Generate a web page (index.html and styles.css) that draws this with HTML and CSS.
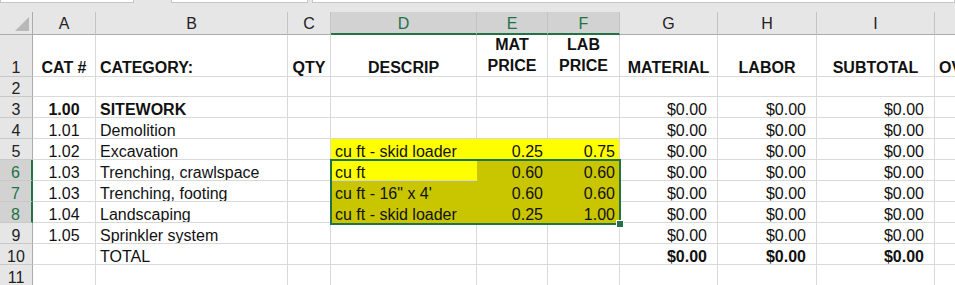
FILE: index.html
```html
<!DOCTYPE html>
<html>
<head>
    <meta charset="UTF-8">
    <title>Estimate</title>
    <link rel="stylesheet" href="styles.css">
</head>
<body>
    <div class="topbar">
        <div class="box name-box"></div>
        <div class="box fx-box"></div>
        <div class="box formula-box"></div>
    </div>

    <div class="sheet">
        <!-- column headers -->
        <div class="hd corner">
            <svg width="14" height="14" viewBox="0 0 14 14"><polygon points="14,0 14,14 0,14" fill="#b8b8b8"/></svg>
        </div>
        <div class="hd">A</div>
        <div class="hd">B</div>
        <div class="hd">C</div>
        <div class="hd sel-col">D</div>
        <div class="hd sel-col">E</div>
        <div class="hd sel-col">F</div>
        <div class="hd">G</div>
        <div class="hd">H</div>
        <div class="hd">I</div>
        <div class="hd"></div>

        <!-- row 1 -->
        <div class="rn top">1</div>
        <div class="c top ctr b">CAT #</div>
        <div class="c top b">CATEGORY:</div>
        <div class="c top ctr b">QTY</div>
        <div class="c top ctr b">DESCRIP</div>
        <div class="c ctr b two">MAT<br>PRICE</div>
        <div class="c ctr b two">LAB<br>PRICE</div>
        <div class="c top ctr b">MATERIAL</div>
        <div class="c top ctr b">LABOR</div>
        <div class="c top ctr b">SUBTOTAL</div>
        <div class="c top b">OVERHEAD</div>

        <!-- row 2 -->
        <div class="rn">2</div>
        <div class="c"></div><div class="c"></div><div class="c"></div><div class="c"></div><div class="c"></div>
        <div class="c"></div><div class="c"></div><div class="c"></div><div class="c"></div><div class="c"></div>

        <!-- row 3 -->
        <div class="rn">3</div>
        <div class="c ctr b">1.00</div>
        <div class="c b">SITEWORK</div>
        <div class="c"></div><div class="c"></div><div class="c"></div><div class="c"></div>
        <div class="c money">$0.00</div>
        <div class="c money">$0.00</div>
        <div class="c money">$0.00</div>
        <div class="c"></div>

        <!-- row 4 -->
        <div class="rn">4</div>
        <div class="c ctr">1.01</div>
        <div class="c">Demolition</div>
        <div class="c"></div><div class="c"></div><div class="c"></div><div class="c"></div>
        <div class="c money">$0.00</div>
        <div class="c money">$0.00</div>
        <div class="c money">$0.00</div>
        <div class="c"></div>

        <!-- row 5 -->
        <div class="rn">5</div>
        <div class="c ctr">1.02</div>
        <div class="c">Excavation</div>
        <div class="c"></div>
        <div class="c yel">cu ft - skid loader</div>
        <div class="c num yel">0.25</div>
        <div class="c num yel last">0.75</div>
        <div class="c money">$0.00</div>
        <div class="c money">$0.00</div>
        <div class="c money">$0.00</div>
        <div class="c"></div>

        <!-- row 6 -->
        <div class="rn sel-row">6</div>
        <div class="c ctr">1.03</div>
        <div class="c">Trenching, crawlspace</div>
        <div class="c"></div>
        <div class="c yel">cu ft</div>
        <div class="c num olv">0.60</div>
        <div class="c num olv last">0.60</div>
        <div class="c money">$0.00</div>
        <div class="c money">$0.00</div>
        <div class="c money">$0.00</div>
        <div class="c"></div>

        <!-- row 7 -->
        <div class="rn sel-row">7</div>
        <div class="c ctr">1.03</div>
        <div class="c">Trenching, footing</div>
        <div class="c"></div>
        <div class="c olv">cu ft - 16" x 4'</div>
        <div class="c num olv">0.60</div>
        <div class="c num olv last">0.60</div>
        <div class="c money">$0.00</div>
        <div class="c money">$0.00</div>
        <div class="c money">$0.00</div>
        <div class="c"></div>

        <!-- row 8 -->
        <div class="rn sel-row">8</div>
        <div class="c ctr">1.04</div>
        <div class="c">Landscaping</div>
        <div class="c"></div>
        <div class="c olv">cu ft - skid loader</div>
        <div class="c num olv">0.25</div>
        <div class="c num olv last">1.00</div>
        <div class="c money">$0.00</div>
        <div class="c money">$0.00</div>
        <div class="c money">$0.00</div>
        <div class="c"></div>

        <!-- row 9 -->
        <div class="rn">9</div>
        <div class="c ctr">1.05</div>
        <div class="c">Sprinkler system</div>
        <div class="c"></div><div class="c"></div><div class="c"></div><div class="c"></div>
        <div class="c money">$0.00</div>
        <div class="c money">$0.00</div>
        <div class="c money">$0.00</div>
        <div class="c"></div>

        <!-- row 10 -->
        <div class="rn">10</div>
        <div class="c"></div>
        <div class="c">TOTAL</div>
        <div class="c"></div><div class="c"></div><div class="c"></div><div class="c"></div>
        <div class="c money b">$0.00</div>
        <div class="c money b">$0.00</div>
        <div class="c money b">$0.00</div>
        <div class="c"></div>

        <!-- row 11 -->
        <div class="rn">11</div>
        <div class="c"></div><div class="c"></div><div class="c"></div><div class="c"></div><div class="c"></div>
        <div class="c"></div><div class="c"></div><div class="c"></div><div class="c"></div><div class="c"></div>

        <div class="selection"><span class="handle"></span></div>
    </div>
</body>
</html>
```

FILE: styles.css
```css
body {
    margin: 0;
    overflow: hidden;
    background-color: #fff;
    font-family: "Liberation Sans", Arial, sans-serif;
    font-size: 16px;
    color: #111;
}

.topbar {
    display: flex;
    height: 12px;
    background-color: #e6e6e6;
    box-sizing: border-box;
}

.box {
    height: 2px;
    background-color: #fff;
    border: 1px solid #c6c6c6;
    border-top: none;
}

.name-box {
    width: 132px;
}

.fx-box {
    width: 135px;
    margin-left: 37px;
}

.formula-box {
    flex: 1;
    margin-left: 4px;
}

.sheet {
    position: relative;
    display: grid;
    grid-template-columns: 33px 63px 192px 43px 146px 71px 72px 98px 99px 118px 118px;
    grid-template-rows: 23px 42px 20px repeat(9, 21px);
    width: 1053px;
}

.hd {
    display: flex;
    align-items: center;
    justify-content: center;
    background-color: #e6e6e6;
    border-right: 1px solid #c3c3c3;
    border-bottom: 1px solid #ababab;
    box-sizing: border-box;
    color: #222;
    padding-top: 2px;
}

.corner {
    justify-content: flex-end;
    align-items: flex-end;
    padding: 0 3px 3px 0;
    border-right-color: #ababab;
}

.sel-col {
    background-color: #d2d2d2;
    color: #217346;
    border-bottom: 2px solid #217346;
}

.rn {
    display: flex;
    align-items: flex-end;
    justify-content: center;
    background-color: #e6e6e6;
    border-right: 1px solid #ababab;
    border-bottom: 1px solid #c8c8c8;
    box-sizing: border-box;
    line-height: 14px;
    color: #222;
}

.sel-row {
    background-color: #d2d2d2;
    color: #217346;
    border-right: 2px solid #217346;
}

.c {
    display: flex;
    align-items: flex-end;
    padding: 0 4px;
    border-right: 1px solid #d9d9d9;
    border-bottom: 1px solid #d9d9d9;
    box-sizing: border-box;
    line-height: 14px;
    white-space: nowrap;
    overflow: hidden;
}

.top {
    line-height: 17px;
}

.ctr {
    justify-content: center;
    text-align: center;
}

.num {
    justify-content: flex-end;
}

.money {
    justify-content: flex-end;
    padding-right: 10px;
}

.b {
    font-weight: bold;
}

.two {
    line-height: 21px;
}

.yel {
    background-color: #ffff00;
    border-right-color: #ffff00;
}

.olv {
    background-color: #c9c600;
    border-right-color: #c9c600;
    border-bottom-color: #c9c600;
}

.last {
    border-right-color: #d9d9d9;
}

.selection {
    position: absolute;
    left: 330px;
    top: 147px;
    width: 291px;
    height: 66px;
    border: 2px solid #217346;
    box-sizing: border-box;
    pointer-events: none;
}

.handle {
    position: absolute;
    right: -5px;
    bottom: -5px;
    width: 6px;
    height: 6px;
    background-color: #217346;
    border: 1px solid #fff;
}
```
